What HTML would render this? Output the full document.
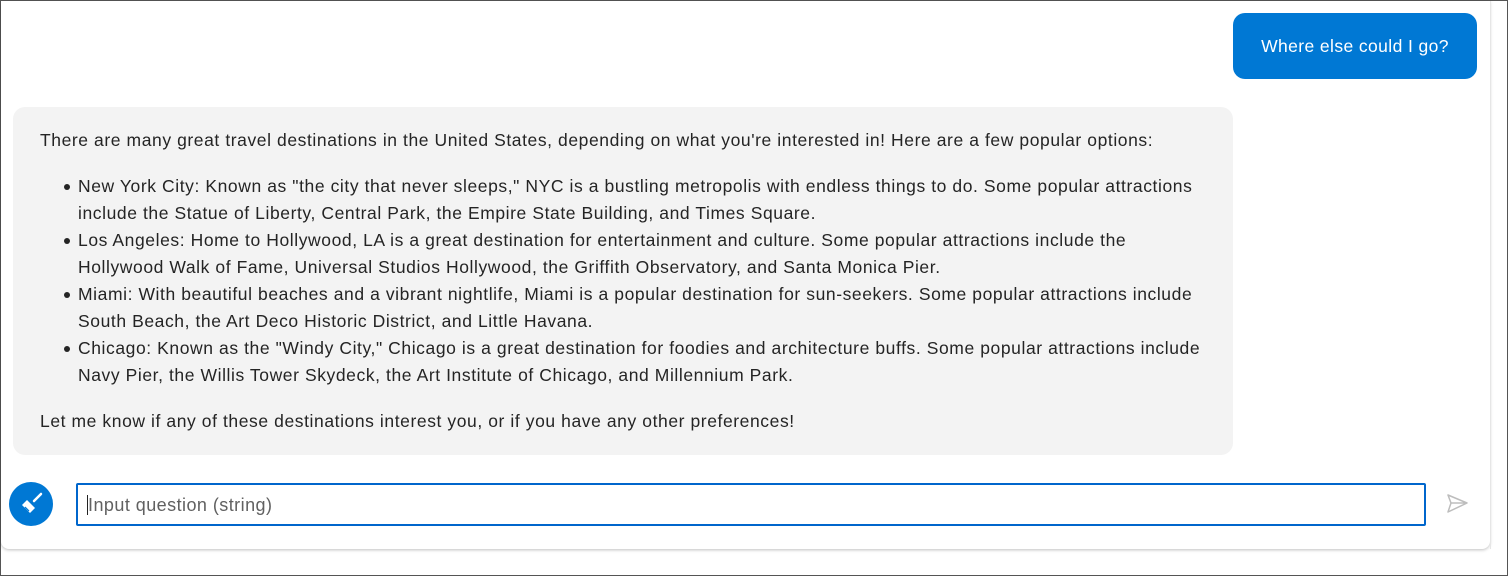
<!DOCTYPE html>
<html><head><style>
html,body{margin:0;padding:0;}
body{width:1508px;height:576px;position:relative;overflow:hidden;background:#fff;font-family:"Liberation Sans",sans-serif;color:#242424;}
.frame{position:absolute;left:0;top:0;width:1506px;height:574px;border:1px solid #555;}
.card{position:absolute;left:1px;top:1px;width:1489px;height:548px;background:#fff;border-radius:0 0 8px 8px;box-shadow:0 1px 3px rgba(0,0,0,.25);}
.sb{position:absolute;left:1490px;top:1px;width:1px;height:548px;background:#e6e6e6;}
.user{position:absolute;left:1233px;top:13px;width:244px;height:66px;background:#0078d4;border-radius:12px;color:#fff;font-size:17.5px;letter-spacing:0.4px;line-height:66px;text-align:center;}
.bot{position:absolute;left:13px;top:107px;width:1220px;height:348px;background:#f3f3f3;border-radius:12px;}
.t{position:absolute;white-space:nowrap;font-size:17.5px;letter-spacing:0.58px;line-height:27px;}
.dot{position:absolute;width:6px;height:6px;border-radius:50%;background:#242424;}
.input{position:absolute;left:76px;top:483px;width:1346px;height:39px;border:2px solid #0066cc;border-radius:2px;}
.ph{position:absolute;left:10px;top:0;line-height:40px;font-size:18px;letter-spacing:0.45px;color:#616161;}
.caret{position:absolute;left:9px;top:10px;width:1px;height:20px;background:#222;}
.broom{position:absolute;left:9px;top:482px;width:44px;height:44px;border-radius:50%;background:#0078d4;}
</style></head><body>
<div class="frame"></div>
<div class="card"></div>
<div class="sb"></div>
<div class="user">Where else could I go?</div>
<div class="bot"></div>
<div class="t" style="left:40px;top:127px">There are many great travel destinations in the United States, depending on what you're interested in! Here are a few popular options:</div>
<div class="dot" style="left:64px;top:184px"></div>
<div class="t" style="left:78px;top:173px">New York City: Known as "the city that never sleeps," NYC is a bustling metropolis with endless things to do. Some popular attractions<br>include the Statue of Liberty, Central Park, the Empire State Building, and Times Square.</div>
<div class="dot" style="left:64px;top:238px"></div>
<div class="t" style="left:78px;top:227px">Los Angeles: Home to Hollywood, LA is a great destination for entertainment and culture. Some popular attractions include the<br>Hollywood Walk of Fame, Universal Studios Hollywood, the Griffith Observatory, and Santa Monica Pier.</div>
<div class="dot" style="left:64px;top:292px"></div>
<div class="t" style="left:78px;top:281px">Miami: With beautiful beaches and a vibrant nightlife, Miami is a popular destination for sun-seekers. Some popular attractions include<br>South Beach, the Art Deco Historic District, and Little Havana.</div>
<div class="dot" style="left:64px;top:346px"></div>
<div class="t" style="left:78px;top:335px">Chicago: Known as the "Windy City," Chicago is a great destination for foodies and architecture buffs. Some popular attractions include<br>Navy Pier, the Willis Tower Skydeck, the Art Institute of Chicago, and Millennium Park.</div>
<div class="t" style="left:40px;top:408px">Let me know if any of these destinations interest you, or if you have any other preferences!</div>
<div class="broom"><svg width="44" height="44" viewBox="0 0 44 44"><path d="M25 19 L32 12" stroke="#fff" stroke-width="2.5" stroke-linecap="round"/><path d="M18 18 L26 26 L21 31 L13 23 Z" fill="#fff"/><path d="M16 25 L20 29" stroke="#0078d4" stroke-width="1.2"/></svg></div>
<div class="input"><div class="caret"></div><div class="ph">Input question (string)</div></div>
<svg style="position:absolute;left:1446px;top:493px" width="24" height="22" viewBox="0 0 24 22"><path d="M2 2 L21 10 L2 19 L5 10 Z M5 10 H21" fill="none" stroke="#bdbdbd" stroke-width="1.5" stroke-linejoin="round"/></svg>
</body></html>
